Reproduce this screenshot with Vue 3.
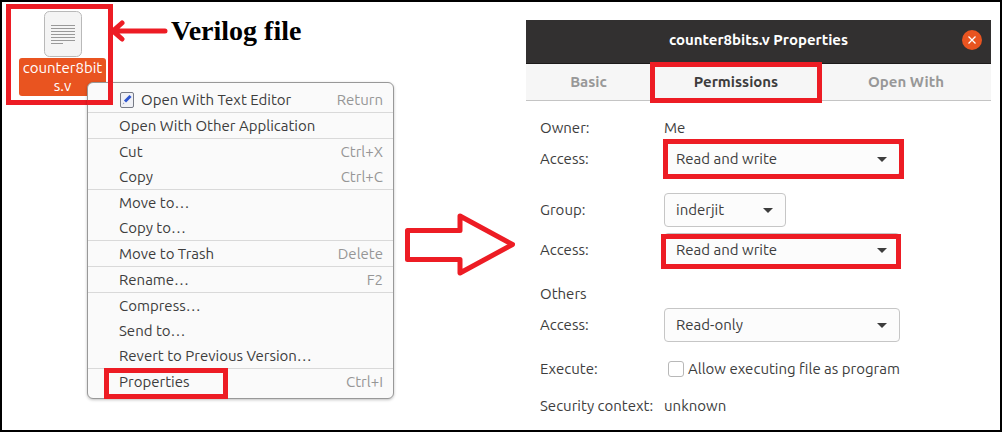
<script setup>
import { ref } from 'vue'

const menuGroups = [
  [{ label: 'Open With Text Editor', key: 'Return', icon: true }],
  [{ label: 'Open With Other Application' }],
  [{ label: 'Cut', key: 'Ctrl+X' }, { label: 'Copy', key: 'Ctrl+C' }],
  [{ label: 'Move to…' }, { label: 'Copy to…' }],
  [{ label: 'Move to Trash', key: 'Delete' }],
  [{ label: 'Rename…', key: 'F2' }],
  [{ label: 'Compress…' }, { label: 'Send to…' }, { label: 'Revert to Previous Version…' }],
  [{ label: 'Properties', key: 'Ctrl+I', marked: true }],
]

const tabs = ['Basic', 'Permissions', 'Open With']
const activeTab = ref('Permissions')

const levels = ['Read and write', 'Read-only', 'None']
const ownerAccess = ref('Read and write')
const group = ref('inderjit')
const groupAccess = ref('Read and write')
const othersAccess = ref('Read-only')
const executable = ref(false)
</script>

<template>
  <main class="figure">
    <section class="desktop">
      <div class="file-row">
        <div class="file">
          <svg class="file-icon" width="38" height="46" viewBox="0 0 38 46" aria-hidden="true">
            <rect x="0.5" y="0.5" width="37" height="45" rx="5" fill="#f4f4f4" stroke="#b9b9b9" />
            <path d="M7 14.500h24M7 17.500h24M7 20.500h24M7 23.500h24M7 26.500h24M7 29.500h24M7 32.500h12" stroke="#999" />
          </svg>
          <span class="file-name">counter8bit<br />s.v</span>
        </div>
        <svg class="pointer" width="58" height="22" viewBox="0 0 58 22" aria-hidden="true">
          <path d="M55 11H3M12 3 3 11l9 8" />
        </svg>
        <strong class="caption">Verilog file</strong>
      </div>

      <div class="menu" role="menu">
        <div v-for="(items, i) in menuGroups" :key="i" class="menu-group">
          <button v-for="item in items" :key="item.label" class="menu-item" role="menuitem" type="button">
            <svg v-if="item.icon" class="editor-icon" width="14" height="16" viewBox="0 0 14 16" aria-hidden="true">
              <rect x="0.5" y="0.5" width="13" height="15" rx="1.5" fill="#f0f1f6" stroke="#777b86" />
              <path d="M5 9.500 10.500 4" stroke="#2f55cf" stroke-width="3" />
              <path d="M2.500 12.500 3.500 10.500 4.500 11.500z" fill="#8e9ac0" />
            </svg>
            <span>{{ item.label }}</span>
            <span v-if="item.key" class="shortcut">{{ item.key }}</span>
            <i v-if="item.marked" class="mark mark-properties"></i>
          </button>
        </div>
      </div>
    </section>

    <svg class="step" width="110" height="64" viewBox="0 0 110 64" aria-hidden="true">
      <path d="M2.500 17.500H55V3L107.500 31.500 55 60V46.500H2.500z" />
    </svg>

    <section class="dialog">
      <header class="titlebar">
        <h1>counter8bits.v Properties</h1>
        <button class="close" type="button" aria-label="Close">
          <svg width="20" height="20" viewBox="0 0 20 20" aria-hidden="true">
            <path d="M6.500 6.500l7 7M13.500 6.500l-7 7" stroke="#fff" stroke-width="1.300" />
          </svg>
        </button>
      </header>

      <nav class="tabs" role="tablist">
        <button
          v-for="tab in tabs"
          :key="tab"
          class="tab"
          :class="{ active: tab === activeTab }"
          role="tab"
          type="button"
          :aria-selected="tab === activeTab"
          @click="activeTab = tab"
        >
          {{ tab }}
          <i v-if="tab === 'Permissions'" class="mark mark-tab"></i>
        </button>
      </nav>

      <form class="form">
        <div class="row">
          <span>Owner:</span>
          <span>Me</span>
        </div>
        <div class="row">
          <label for="owner-access">Access:</label>
          <div class="picker">
            <select id="owner-access" v-model="ownerAccess">
              <option v-for="l in levels" :key="l">{{ l }}</option>
            </select>
            <svg class="caret" width="10" height="5" viewBox="0 0 10 5"><path d="M0 0h10L5 5z" /></svg>
            <i class="mark mark-owner"></i>
          </div>
        </div>
        <div class="row section">
          <label for="group">Group:</label>
          <div class="picker small">
            <select id="group" v-model="group">
              <option>inderjit</option>
            </select>
            <svg class="caret" width="10" height="5" viewBox="0 0 10 5"><path d="M0 0h10L5 5z" /></svg>
          </div>
        </div>
        <div class="row tight">
          <label for="group-access">Access:</label>
          <div class="picker">
            <select id="group-access" v-model="groupAccess">
              <option v-for="l in levels" :key="l">{{ l }}</option>
            </select>
            <svg class="caret" width="10" height="5" viewBox="0 0 10 5"><path d="M0 0h10L5 5z" /></svg>
            <i class="mark mark-group"></i>
          </div>
        </div>
        <div class="row section">
          <span>Others</span>
        </div>
        <div class="row">
          <label for="others-access">Access:</label>
          <div class="picker">
            <select id="others-access" v-model="othersAccess">
              <option v-for="l in levels" :key="l">{{ l }}</option>
            </select>
            <svg class="caret" width="10" height="5" viewBox="0 0 10 5"><path d="M0 0h10L5 5z" /></svg>
          </div>
        </div>
        <div class="row section">
          <span>Execute:</span>
          <label class="check">
            <input v-model="executable" type="checkbox" />
            Allow executing file as program
          </label>
        </div>
        <div class="row section">
          <span>Security context:</span>
          <span>unknown</span>
        </div>
      </form>
    </section>
  </main>
</template>

<style>
body {
  margin: 0;
  background: #fff;
}
</style>

<style scoped>
.figure {
  box-sizing: border-box;
  min-height: 100vh;
  border: 2px solid #000;
  background: #fff;
  color: #3d3d3d;
  font-family: Ubuntu, "Noto Sans", sans-serif;
  font-size: 15px;
  line-height: 20px;
  display: flex;
  align-items: flex-start;
}

button,
select {
  font: inherit;
  color: inherit;
}

.desktop {
  flex: none;
}

/* selected file and its annotation */
.file-row {
  display: flex;
  align-items: flex-start;
  padding: 2px 0 0 4px;
}

.file {
  position: relative;
  z-index: 0;
  box-sizing: border-box;
  width: 107px;
  border: 5px solid #ed1c24;
  padding: 2px 2px 4px 8px;
  display: flex;
  flex-direction: column;
  align-items: center;
}

.file-icon {
  display: block;
}

.file-name {
  align-self: stretch;
  margin-top: 1px;
  padding: 1px 0;
  border-radius: 3px;
  background: #e95420;
  color: #fff;
  line-height: 18px;
  text-align: center;
}

.pointer {
  margin: 16px 0 0 -3px;
  position: relative;
  fill: none;
  stroke: #ed1c24;
  stroke-width: 5px;
  stroke-linecap: round;
}

.caption {
  margin: 11px 0 0 3px;
  color: #000;
  font-family: "Liberation Serif", serif;
  font-size: 28px;
  line-height: 32px;
}

/* context menu */
.menu {
  position: relative;
  box-sizing: border-box;
  width: 307px;
  margin: -23px 0 0 85px;
  padding: 4px 0;
  border: 1px solid #989898;
  border-radius: 6px;
  background: #fafafa;
  box-shadow: 0 1px 3px rgba(0, 0, 0, 0.25);
}

/* corner of the file's frame, continued over the menu */
.menu::before {
  content: "";
  position: absolute;
  top: -1px;
  left: -1px;
  width: 21px;
  height: 18px;
  border: solid #ed1c24;
  border-width: 0 5px 5px 0;
  pointer-events: none;
}

.menu-group + .menu-group {
  border-top: 1px solid #d9d9d9;
}

.menu-item {
  position: relative;
  box-sizing: border-box;
  width: 100%;
  height: 25px;
  padding: 0 10px 0 31px;
  border: 0;
  background: none;
  display: flex;
  align-items: center;
  text-align: left;
}

.editor-icon {
  margin: 0 7px 0 1px;
}

.shortcut {
  margin-left: auto;
  color: #969696;
}

.step {
  flex: none;
  margin: 211px 11px 0 11px;
  fill: none;
  stroke: #ed1c24;
  stroke-width: 5px;
  stroke-linejoin: round;
}

/* properties window */
.dialog {
  flex: 1;
  margin: 18px 9px 0 0;
}

.titlebar {
  box-sizing: border-box;
  height: 44px;
  padding: 0 9px 4px 29px;
  border-bottom: 1px solid #1c1a1a;
  background: #323030;
  display: flex;
  align-items: center;
}

h1 {
  flex: 1;
  margin: 0;
  color: #fff;
  font-size: 15px;
  font-weight: 700;
  text-align: center;
}

.close {
  width: 20px;
  height: 20px;
  padding: 0;
  border: 0;
  border-radius: 50%;
  background: #e95420;
}

.close svg {
  display: block;
}

.tabs {
  height: 36px;
  border-bottom: 1px solid #c4c4c4;
  background: #f6f6f6;
  display: grid;
  grid-template-columns: 125fr 170fr 170fr;
}

.tab {
  position: relative;
  padding: 0;
  border: 0;
  background: none;
  color: #989898;
  font-weight: 700;
}

.tab.active {
  color: #3d3d3d;
}

.form {
  padding: 17px 14px 0;
  display: flex;
  flex-direction: column;
  gap: 4px;
}

.row {
  display: grid;
  grid-template-columns: 124px 1fr;
  align-items: center;
}

.row.section {
  margin-top: 13px;
}

.row.tight {
  margin-top: 2px;
}

.picker {
  position: relative;
  width: 236px;
}

.picker.small {
  width: 122px;
}

select {
  appearance: none;
  display: block;
  box-sizing: border-box;
  width: 100%;
  height: 34px;
  padding: 0 30px 0 11px;
  border: 1px solid #c6c6c6;
  border-radius: 4px;
  background: #fcfcfc;
}

.caret {
  position: absolute;
  right: 13px;
  top: 15px;
  fill: #3d3d3d;
  pointer-events: none;
}

.check {
  display: flex;
  align-items: center;
  gap: 4px;
}

input {
  appearance: none;
  box-sizing: border-box;
  width: 16px;
  height: 16px;
  margin: 0 0 0 4px;
  border: 1px solid #b8b8b8;
  border-radius: 3px;
  background: #fff;
}

/* red highlight frames laid over the controls */
.mark {
  position: absolute;
  border: 5px solid #ed1c24;
  pointer-events: none;
}

.mark-properties {
  top: -1px;
  left: 16px;
  width: 114px;
  height: 21px;
}

.mark-tab {
  inset: -2px -1px -3px -1px;
}

.mark-owner {
  inset: -3px -4px -3px -1px;
}

.mark-group {
  inset: 1px -1px -2px -3px;
}
</style>
